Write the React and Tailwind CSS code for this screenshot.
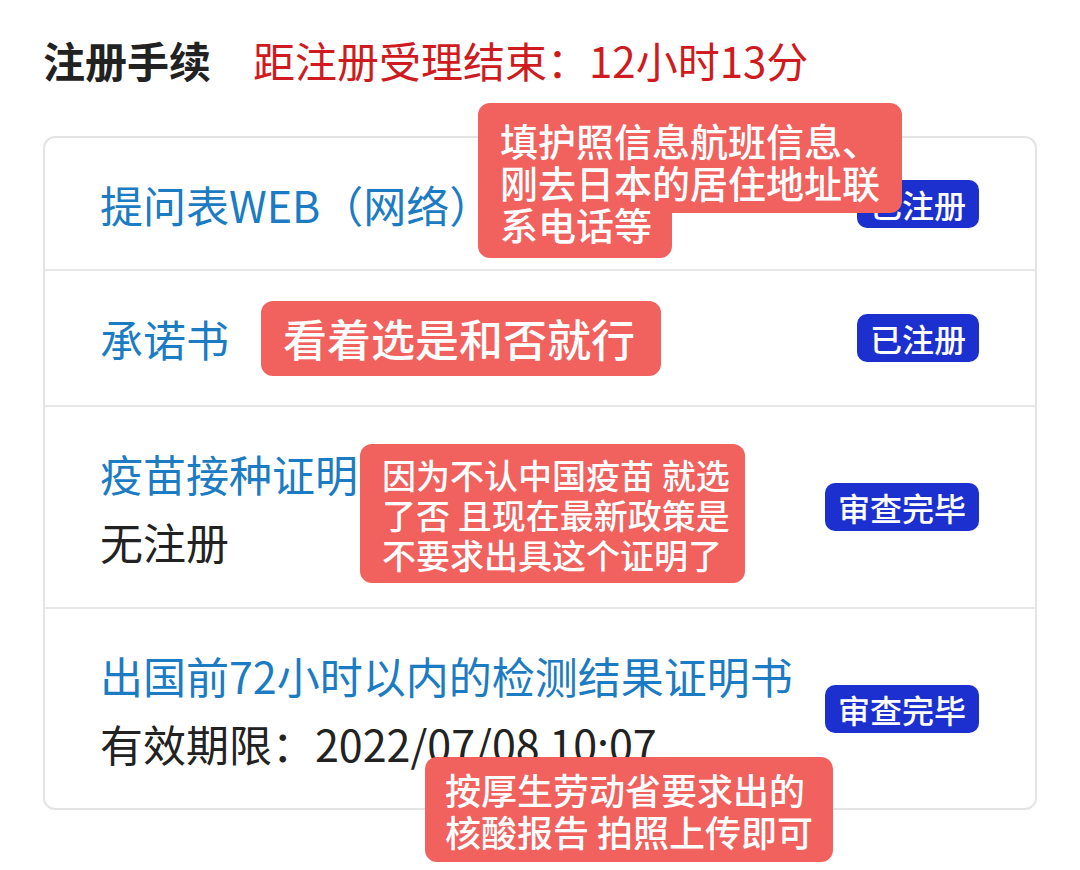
import React from 'react';

const Badge = ({ children }) => (
  <span className="h-[48px] px-[13px] rounded-[10px] bg-[#1c30cf] text-white text-[32px] leading-[48px] font-medium whitespace-nowrap">
    {children}
  </span>
);

const rows = [
  { title: '提问表WEB（网络）', badge: '已注册', h: 'h-[133px]' },
  { title: '承诺书', badge: '已注册', h: 'h-[136px]' },
  { title: '疫苗接种证明', sub: '无注册', badge: '审查完毕', h: 'h-[202px]' },
  { title: '出国前72小时以内的检测结果证明书', sub: '有效期限：2022/07/08 10:07', badge: '审查完毕', h: 'h-[199px]', last: true },
];

export default function App() {
  return (
    <div className="relative w-[1080px] h-[870px] bg-white overflow-hidden font-['Noto_Sans_CJK_SC',sans-serif]">
      {/* Header */}
      <div className="pt-[36px] pl-[43px] flex items-center gap-[42px] text-[42px] leading-[48px] whitespace-nowrap">
        <span className="font-bold text-[#222222]">注册手续</span>
        <span className="text-[#cf1b20]">距注册受理结束：12小时13分</span>
      </div>

      {/* Card */}
      <div className="mt-[52px] mx-[43px] border-2 border-[#e4e4e4] rounded-[12px] bg-white">
        {rows.map((r) => (
          <div
            key={r.title}
            className={`${r.h} flex items-center justify-between pl-[55px] pr-[56px] ${r.last ? '' : 'border-b-2 border-[#e6e6e6]'}`}
          >
            <div className="flex flex-col gap-[20px] text-[43px] leading-[48px] whitespace-nowrap">
              <span className="text-[#1b7bc3]">{r.title}</span>
              {r.sub && <span className="text-[#222222]">{r.sub}</span>}
            </div>
            <Badge>{r.badge}</Badge>
          </div>
        ))}
      </div>

      {/* Annotations */}
      <div className="absolute left-[478px] top-[103px] flex flex-col items-start text-white text-[38px] leading-[42px] font-medium whitespace-nowrap">
        <div className="w-[424px] bg-[#f1615e] pl-[22px] pt-[16px] pb-[10px] rounded-t-[12px] rounded-br-[12px]">
          <div>填护照信息航班信息、</div>
          <div>刚去日本的居住地址联</div>
        </div>
        <div className="w-[194px] -mt-[10px] bg-[#f1615e] pl-[22px] pb-[13px] rounded-b-[12px]">
          <div>系电话等</div>
        </div>
      </div>

      <div className="absolute left-[261px] top-[301px] w-[400px] h-[75px] bg-[#f1615e] rounded-[12px] pl-[22px] text-white text-[44px] leading-[75px] font-medium whitespace-nowrap">
        看着选是和否就行
      </div>

      <div className="absolute left-[360px] top-[444px] w-[385px] bg-[#f1615e] rounded-[12px] pl-[22px] pt-[11px] pb-[8px] text-white text-[34px] leading-[40px] font-medium whitespace-nowrap">
        <div>因为不认中国疫苗 就选</div>
        <div>了否 且现在最新政策是</div>
        <div>不要求出具这个证明了</div>
      </div>

      <div className="absolute left-[425px] top-[757px] w-[408px] bg-[#f1615e] rounded-[12px] pl-[20px] pt-[11px] pb-[10px] text-white text-[36px] leading-[42px] font-medium whitespace-nowrap">
        <div>按厚生劳动省要求出的</div>
        <div>核酸报告 拍照上传即可</div>
      </div>
    </div>
  );
}
